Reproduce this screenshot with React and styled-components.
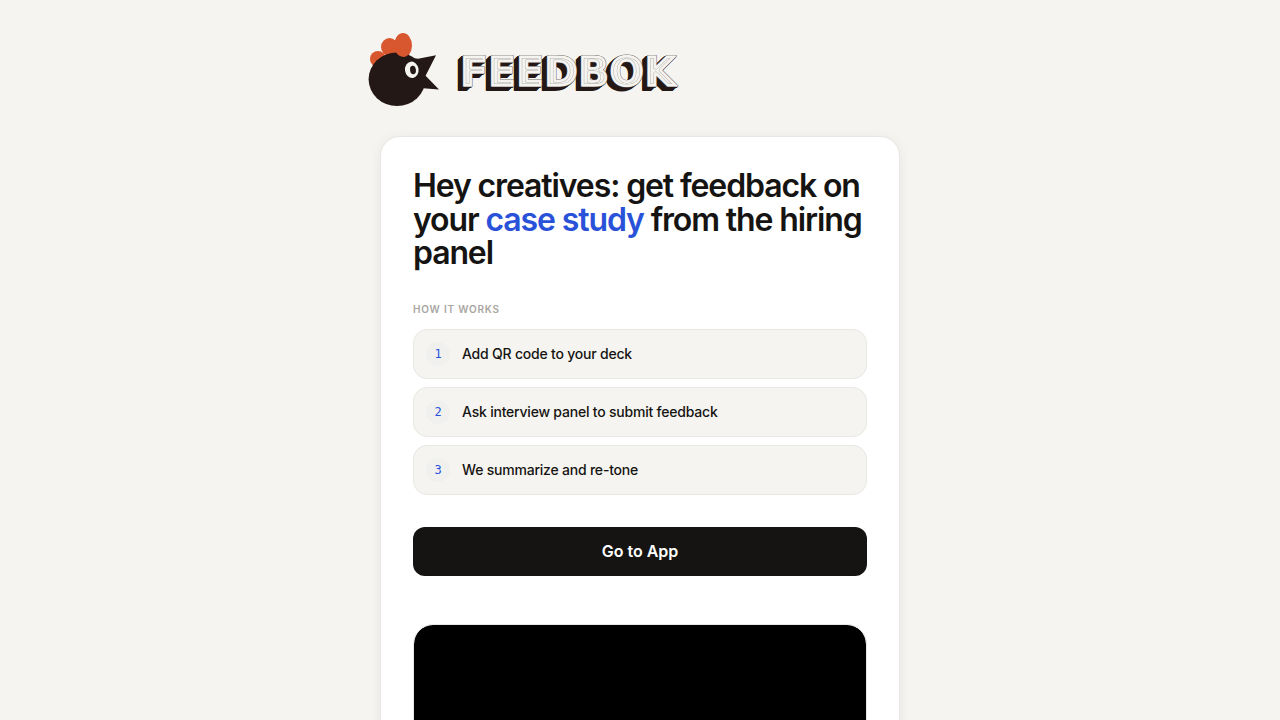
import React from "react";
import styled, {createGlobalStyle} from 'styled-components'

const GlobalStyle = createGlobalStyle`
  * {
    box-sizing: border-box;
  }

  body {
    margin: 0;
    background: #f5f4f0;
    color: #151412;
    font-family: Inter, sans-serif;
    -webkit-font-smoothing: antialiased;
  }
`

//Styled Components
const Page = styled.div`
  min-height: 100vh;
  padding: 32px 16px;
  overflow: hidden;
`

const Header = styled.header`
  max-width: 544px;
  margin: 0 auto 28px;
`

const HomeLink = styled.a`
  display: block;
  width: 314px;
  max-width: 100%;
`

const LogoSvg = styled.svg`
  display: block;
  width: 100%;
  height: auto;
  overflow: visible;
`

const Wordmark = styled.text`
  font-family: "DejaVu Sans", sans-serif;
  font-weight: 700;
  font-size: 41px;
  stroke-linejoin: round;
`

const Card = styled.main`
  max-width: 520px;
  margin: 0 auto;
  padding: 32px;
  background: #fff;
  border: 1px solid #e8e7e3;
  border-radius: 20px;
  box-shadow: 0 2px 12px rgba(0, 0, 0, 0.06);
`

const Title = styled.h1`
  margin: 0 0 32px;
  font-size: 32px;
  font-weight: 600;
  line-height: 1.05;
  letter-spacing: -0.035em;
`

const Accent = styled.span`
  color: #2952d9;
`

const Label = styled.h2`
  margin: 0 0 12px;
  font-size: 10px;
  line-height: 15px;
  font-weight: 600;
  letter-spacing: 0.08em;
  text-transform: uppercase;
  color: #a8a6a1;
`

const Steps = styled.ol`
  display: grid;
  gap: 8px;
  margin: 0 0 32px;
  padding: 0;
  list-style: none;
`

const Step = styled.li`
  display: flex;
  align-items: center;
  gap: 12px;
  padding: 12px;
  background: #f5f4f0;
  border: 1px solid #e8e7e3;
  border-radius: 14px;
  font-size: 14px;
  line-height: 20px;
  font-weight: 500;
  letter-spacing: -0.015em;
`

const StepNumber = styled.span`
  display: flex;
  align-items: center;
  justify-content: center;
  flex: none;
  width: 24px;
  height: 24px;
  border-radius: 50%;
  background: #f0f0ef;
  color: #2952d9;
  font-family: "DejaVu Sans Mono", monospace;
  font-size: 12px;
  letter-spacing: 0;
`

const AppButton = styled.button`
  display: block;
  width: 100%;
  margin: 0 0 48px;
  padding: 14px 24px;
  border: 0;
  border-radius: 12px;
  background: #151412;
  color: #fff;
  font-family: inherit;
  font-size: 16px;
  line-height: 21px;
  font-weight: 600;
  cursor: pointer;
`

const VideoFrame = styled.div`
  aspect-ratio: 16 / 9;
  border: 1px solid #e8e7e3;
  border-radius: 20px;
  background: #000;
  background-clip: padding-box;
`

const steps = [
    'Add QR code to your deck',
    'Ask interview panel to submit feedback',
    'We summarize and re-tone',
]

function Logo() {
    return (
        <LogoSvg viewBox="0 0 314 76" role="img" aria-label="Feedbok">
            <defs>
                <Wordmark id="word" x="92" y="54">FEEDBOK</Wordmark>
                <clipPath id="face">
                    <use href="#word"/>
                </clipPath>
            </defs>

            {/* comb */}
            <g fill="#d9572f">
                <ellipse cx="10" cy="27" rx="8" ry="8"/>
                <ellipse cx="21.5" cy="15" rx="8.5" ry="9"/>
                <ellipse cx="35" cy="13.5" rx="9" ry="12.5"/>
            </g>
            {/* head and beak */}
            <ellipse cx="29" cy="47.3" rx="28.4" ry="26.8" fill="#231815"/>
            <path d="M45 26 L50 26.8 L68 23.3 L57.6 43.7 L71 57.5 L52 56 Z" fill="#231815"/>
            <path d="M28 20 Q30 24.5 36 24.9 Q41 24 43 18 L35 8 Z" fill="#d9572f"/>
            {/* eye */}
            <ellipse cx="43.8" cy="37.8" rx="6.8" ry="8.2" fill="#f5f4f0" transform="rotate(-8 43.8 37.8)"/>
            <ellipse cx="45" cy="38" rx="2.9" ry="4.2" fill="#231815" transform="rotate(-8 45 38)"/>

            {/* extruded side, one pixel at a time */}
            <g fill="#231815" stroke="#231815" strokeWidth="2">
                {[5, 4, 3, 2, 1].map(n => (
                    <use key={n} href="#word" x={-n} y={n * 0.7}/>
                ))}
            </g>
            {/* face with its outline and the thin line inside it */}
            <use href="#word" fill="#f5f4f0" stroke="#77716e" strokeWidth="2"/>
            <use href="#word" fill="#f5f4f0" stroke="#f5f4f0" strokeWidth="0.8"/>
            <g clipPath="url(#face)">
                <use href="#word" fill="#f5f4f0" stroke="#b5b1ad" strokeWidth="5"/>
                <use href="#word" fill="none" stroke="#f5f4f0" strokeWidth="4"/>
            </g>
        </LogoSvg>
    )
}

function App() {
    return (
        <Page>
            <GlobalStyle/>
            <Header>
                <HomeLink href="/">
                    <Logo/>
                </HomeLink>
            </Header>
            <Card>
                <Title>
                    Hey creatives: get feedback on your <Accent>case study</Accent> from the hiring panel
                </Title>
                <Label>How it works</Label>
                <Steps>
                    {steps.map((step, i) => (
                        <Step key={step}>
                            <StepNumber>{i + 1}</StepNumber>
                            {step}
                        </Step>
                    ))}
                </Steps>
                <AppButton type="button">Go to App</AppButton>
                <VideoFrame/>
            </Card>
        </Page>
    )
}

export default App
